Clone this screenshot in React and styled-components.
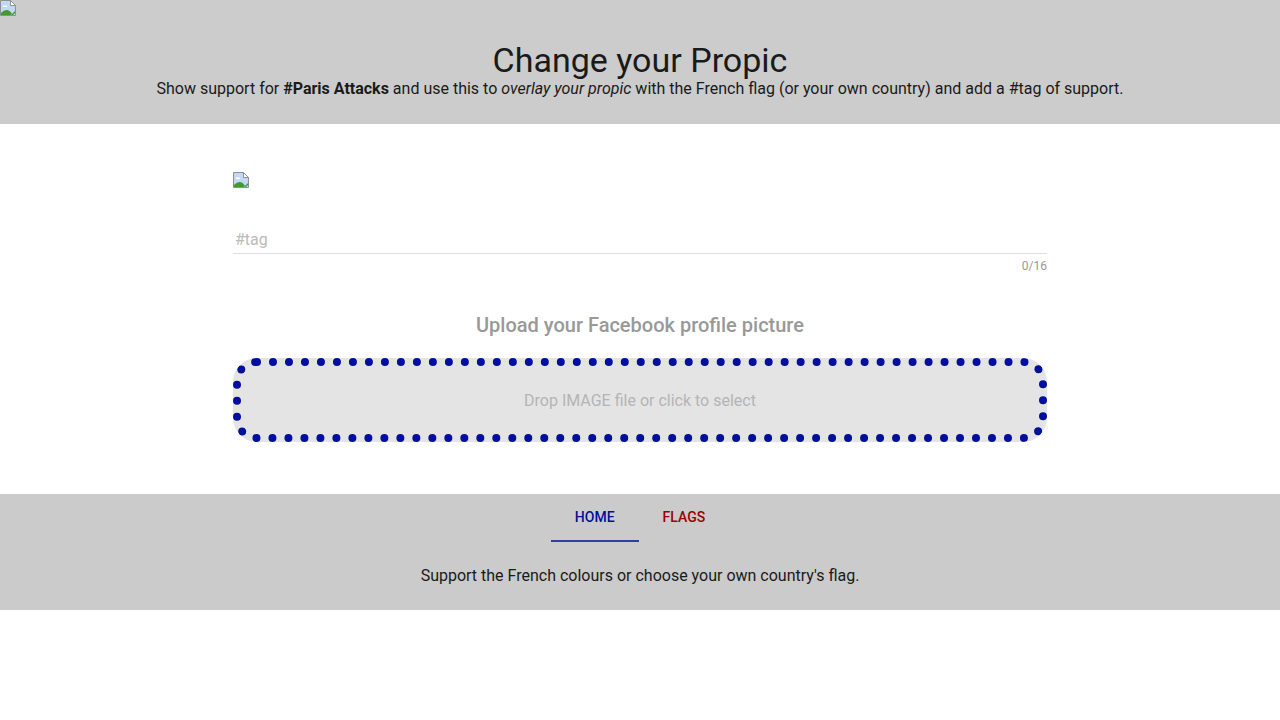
import React from "react";
import styled, { createGlobalStyle } from "styled-components";

const GlobalStyle = createGlobalStyle`
	html, body {
		margin: 0;
		padding: 0;
		background: #fff;
		font-family: Roboto, "Liberation Sans", sans-serif;
		color: #1a1a1a;
	}
`;

function BrokenImage() {
	return (
		<BrokenIcon viewBox="0 0 16 16" width="16" height="16">
			<path d="M0.5 0.5H10.5L15.5 5.5V15.5H0.5Z" fill="#c3d8f5" stroke="#8f8f8f" />
			<path d="M10.5 0.5V5.5H15.5Z" fill="#fff" stroke="#8f8f8f" />
			<path d="M3 5.5h4v1.5H3Z" fill="#fff" />
			<path d="M1 15V13C4 10 7 9 9.5 11L12 13.5L10.5 15Z" fill="#3f9b2c" />
			<path d="M11 15L15 11V13L13 15Z" fill="#3f9b2c" />
		</BrokenIcon>
	);
}

function App() {
	return (
		<>
			<GlobalStyle />
			<Header>
				<BrokenImage />
				<Title>Change your Propic</Title>
				<Lead>
					Show support for <b>#Paris Attacks</b> and use this to <i>overlay your propic</i> with the
					French flag (or your own country) and add a #tag of support.
				</Lead>
			</Header>
			<Main>
				<BrokenImage />
				<TagField>
					<TagInput placeholder="#tag" />
					<Counter>0/16</Counter>
				</TagField>
				<UploadTitle>Upload your Facebook profile picture</UploadTitle>
				<DropZone>Drop IMAGE file or click to select</DropZone>
			</Main>
			<Footer>
				<Tabs>
					<Tab $active>HOME</Tab>
					<Tab $color="#9c0000">FLAGS</Tab>
				</Tabs>
				<FooterText>Support the French colours or choose your own country's flag.</FooterText>
			</Footer>
		</>
	);
}

export default App;

const BrokenIcon = styled.svg`
	display: block;
`;

const Header = styled.header`
	background: #ccc;
	height: 124px;
	text-align: center;
`;

const Title = styled.h1`
	margin: 0;
	padding-top: 24px;
	font-size: 34px;
	font-weight: 400;
	line-height: 40px;
`;

const Lead = styled.p`
	margin: 0;
	font-size: 16px;
	line-height: 18px;
`;

const Main = styled.main`
	width: 814px;
	margin: 0 auto;
	padding-top: 48px;
	height: 370px;
	box-sizing: border-box;
`;

const TagField = styled.div`
	margin-top: 38px;
`;

const TagInput = styled.input`
	display: block;
	width: 100%;
	box-sizing: border-box;
	height: 28px;
	padding: 0 2px;
	border: 0;
	border-bottom: 1px solid #e0e0e0;
	outline: none;
	background: transparent;
	font-family: inherit;
	font-size: 16px;
	color: #1a1a1a;

	&::placeholder {
		color: #bbb;
		opacity: 1;
	}
`;

const Counter = styled.div`
	margin-top: 5px;
	text-align: right;
	font-size: 12px;
	line-height: 14px;
	color: #999;
`;

const UploadTitle = styled.h2`
	margin: 40px 0 21px;
	text-align: center;
	font-size: 20px;
	font-weight: 500;
	line-height: 24px;
	color: #999;
`;

const DropZone = styled.div`
	height: 84px;
	box-sizing: border-box;
	display: flex;
	align-items: center;
	justify-content: center;
	border: 8px dotted #000f9c;
	border-radius: 24px;
	background: #e4e4e4;
	font-size: 16px;
	color: #b4b4b4;
`;

const Footer = styled.footer`
	background: #cbcbcb;
	height: 116px;
`;

const Tabs = styled.nav`
	display: flex;
	justify-content: center;
	height: 48px;
`;

const Tab = styled.a`
	box-sizing: border-box;
	display: flex;
	align-items: center;
	justify-content: center;
	padding: 0 24px;
	font-size: 14px;
	font-weight: 500;
	color: ${(props) => (props.$active ? "#000f9c" : props.$color)};
	border-bottom: 2px solid ${(props) => (props.$active ? "#2f3fa8" : "transparent")};
`;

const FooterText = styled.p`
	margin: 0;
	padding-top: 25px;
	text-align: center;
	font-size: 16px;
	line-height: 18px;
`;
